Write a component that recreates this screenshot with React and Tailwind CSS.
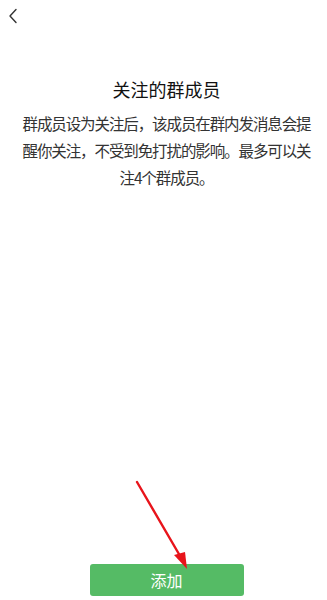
import React from "react";

export default function App() {
  return (
    <div
      className="relative w-[327px] h-[600px] bg-white flex flex-col overflow-hidden"
      style={{ fontFamily: '"Noto Sans CJK SC", "Noto Sans", sans-serif' }}
    >
      <div className="h-[32px] flex items-center pl-[8px]">
        <svg width="10" height="16" viewBox="0 0 10 16" fill="none">
          <path d="M8 1.5L2 8l6 6.5" stroke="#333" strokeWidth="1.4" strokeLinecap="round" strokeLinejoin="round" />
        </svg>
      </div>
      <div className="mt-[44px] text-center text-[18px] leading-[26px] font-normal text-[#111] pl-[6px]">
        关注的群成员
      </div>
      <div className="mt-[8px] pl-[6px] flex flex-col items-center text-[15.5px] tracking-[-1.1px] leading-[27px] text-[#333] whitespace-nowrap">
        <div>群成员设为关注后，该成员在群内发消息会提</div>
        <div>醒你关注，不受到免打扰的影响。最多可以关</div>
        <div>注4个群成员。</div>
      </div>
      <div className="flex-1" />
      <div className="flex justify-center mb-[4px] pl-[6px]">
        <div className="w-[154px] h-[32px] rounded-[3px] bg-[#55bb65] flex items-center justify-center text-white text-[16px] font-normal">
          添加
        </div>
      </div>
      <svg className="absolute left-0 top-0 pointer-events-none" width="327" height="600">
        <line x1="137" y1="482" x2="183" y2="561" stroke="#e8141b" strokeWidth="2.4" strokeLinecap="round" />
        <polygon points="187,569 174,555 185,552" fill="#e8141b" />
      </svg>
    </div>
  );
}
